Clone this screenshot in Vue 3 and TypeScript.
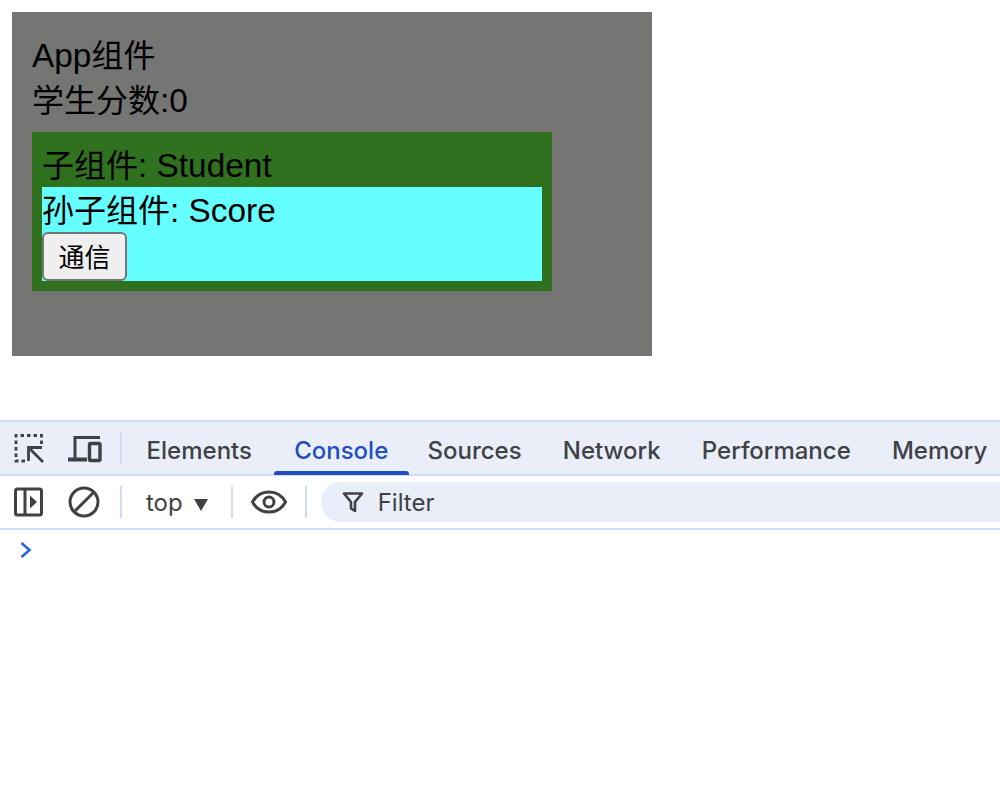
<script setup lang="ts">
const tabs: string[] = ['Elements', 'Console', 'Sources', 'Network', 'Performance', 'Memory']
</script>

<template>
  <div class="page">
    <div class="app">
      <div class="line"><span class="latin">App</span>组件</div>
      <div class="line">学生分数<span class="latin">:0</span></div>
      <div class="student">
        <div class="line">子组件<span class="latin">: Student</span></div>
        <div class="score">
          <div class="line">孙子组件<span class="latin">: Score</span></div>
          <button class="btn" type="button">通信</button>
        </div>
      </div>
    </div>

    <div class="devtools">
      <div class="tabbar">
        <svg class="icon first" width="30" height="32" viewBox="0 0 30 32" fill="none" stroke="#3f4145" stroke-width="2.800">
          <path d="M27.500 12V3.500H2V29H11" stroke-dasharray="3.500 3" />
          <path d="M28 15.500H14.500V29M14.500 15.500 29 30" />
        </svg>
        <svg class="icon second" width="34" height="32" viewBox="0 0 34 32" fill="none" stroke="#3f4145">
          <path d="M7 27V5.500h25" stroke-width="3" />
          <path d="M0 27.500h19" stroke-width="4" />
          <rect x="21.500" y="11.500" width="10.500" height="17" rx="1" stroke-width="3.400" />
        </svg>
        <span class="divider tabdiv"></span>
        <div class="tabs">
          <div v-for="t in tabs" :key="t" class="tab" :class="{ active: t === 'Console' }">{{ t }}</div>
        </div>
      </div>
      <div class="toolbar">
        <svg class="icon first" width="29" height="30" viewBox="0 0 29 30" fill="none" stroke="#3f4145">
          <rect x="1.500" y="2" width="26" height="26" rx="2" stroke-width="3" />
          <path d="M11 2v26" stroke-width="3" />
          <path d="M16 8.500v13l7-6.500z" fill="#3f4145" stroke="none" />
        </svg>
        <svg class="icon ban" width="32" height="32" viewBox="0 0 32 32" fill="none" stroke="#3f4145" stroke-width="3">
          <circle cx="16" cy="16" r="14" />
          <path d="M6 26 26 6" />
        </svg>
        <span class="divider d1"></span>
        <span class="top">top</span>
        <svg class="caret" width="16" height="12" viewBox="0 0 16 12"><path d="M1 0h14l-7 12z" fill="#3f4145" /></svg>
        <span class="divider d2"></span>
        <svg class="eye" width="36" height="24" viewBox="0 0 36 24" fill="none" stroke="#3f4145" stroke-width="3">
          <path d="M1.500 12C5 5.500 11 2 18 2s13 3.500 16.500 10C31 18.500 25 22 18 22S5 18.500 1.500 12z" />
          <circle cx="18" cy="12" r="5" />
        </svg>
        <span class="divider d3"></span>
        <div class="filter">
          <svg width="22" height="22" viewBox="0 0 22 22" fill="none" stroke="#3f4145" stroke-width="2.600" stroke-linejoin="round">
            <path d="M2 2.500h18l-7 8.500v9l-4-2.500v-6.500z" />
          </svg>
          <span class="filter-text">Filter</span>
        </div>
      </div>
      <div class="prompt">
        <svg width="14" height="18" viewBox="0 0 14 18" fill="none" stroke="#2a62d8" stroke-width="2.600"><path d="M2.500 2l8 7-8 7" /></svg>
      </div>
    </div>
  </div>
</template>

<style>
html, body { margin: 0; background: #fff; }
</style>

<style scoped>
.page { width: 1000px; height: 812px; padding-top: 12px; box-sizing: border-box; overflow: hidden; font-family: "Liberation Sans", "Noto Sans CJK SC", sans-serif; color: #000; }
.app { width: 600px; margin-left: 12px; padding: 20px 20px 65px; background: #757573; }
.line { font-size: 32px; height: 45px; line-height: 48px; }
.latin { font-size: 33.4px; }
.student { width: 500px; margin-top: 10px; padding: 10px; background: #2f711f; }
.score { background: #66ffff; height: 94px; }
.btn { display: block; width: 85px; height: 49px; padding: 0 0 3px; font: 26px "Liberation Sans", "Noto Sans CJK SC", sans-serif; color: #000; background: #efefef; border: 2px solid #767676; border-radius: 6px; }
.devtools { margin-top: 64px; font-family: Inter, "Liberation Sans", sans-serif; color: #3f4145; }
.tabbar { height: 52px; display: flex; align-items: center; background: #e9eef9; border-top: 2px solid #d0dcf5; border-bottom: 2px solid #d0dcf5; position: relative; }
.toolbar { height: 52px; display: flex; align-items: center; border-bottom: 2px solid #d0dcf5; box-sizing: content-box; }
.icon { flex: none; }
.first { margin-left: 14px; }
.second { margin-left: 24px; }
.ban { margin-left: 25px; }
.divider { flex: none; width: 2px; height: 32px; background: #d0dcf5; }
.tabdiv { margin-left: 18px; }
.tabs { display: flex; margin-left: 4px; height: 100%; }
.tab { height: 100%; box-sizing: border-box; display: flex; align-items: center; padding: 4px 20.600px 0; font-size: 24px; font-weight: 500; white-space: nowrap; }
.tab.active { color: #1f4ec4; position: relative; margin-left: 1px; margin-right: -2px; }
.tab.active::after { content: ""; position: absolute; left: 0; right: 0; bottom: -1px; height: 4px; background: #1f4ec4; border-radius: 3px 3px 0 0; }
.d1 { margin-left: 20px; }
.top { margin-left: 24px; font-size: 24px; }
.caret { margin-left: 10px; margin-top: 6px; }
.d2 { margin-left: 22px; }
.eye { margin-left: 18px; }
.d3 { margin-left: 18px; }
.filter { margin-left: 14px; flex: 1; height: 40px; display: flex; align-items: center; background: #e9eef9; border-radius: 20px 0 0 20px; padding-left: 21px; }
.filter-text { margin-left: 14px; font-size: 24px; }
.prompt { padding: 11px 0 0 19px; height: 20px; }
.prompt svg { display: block; }
</style>
